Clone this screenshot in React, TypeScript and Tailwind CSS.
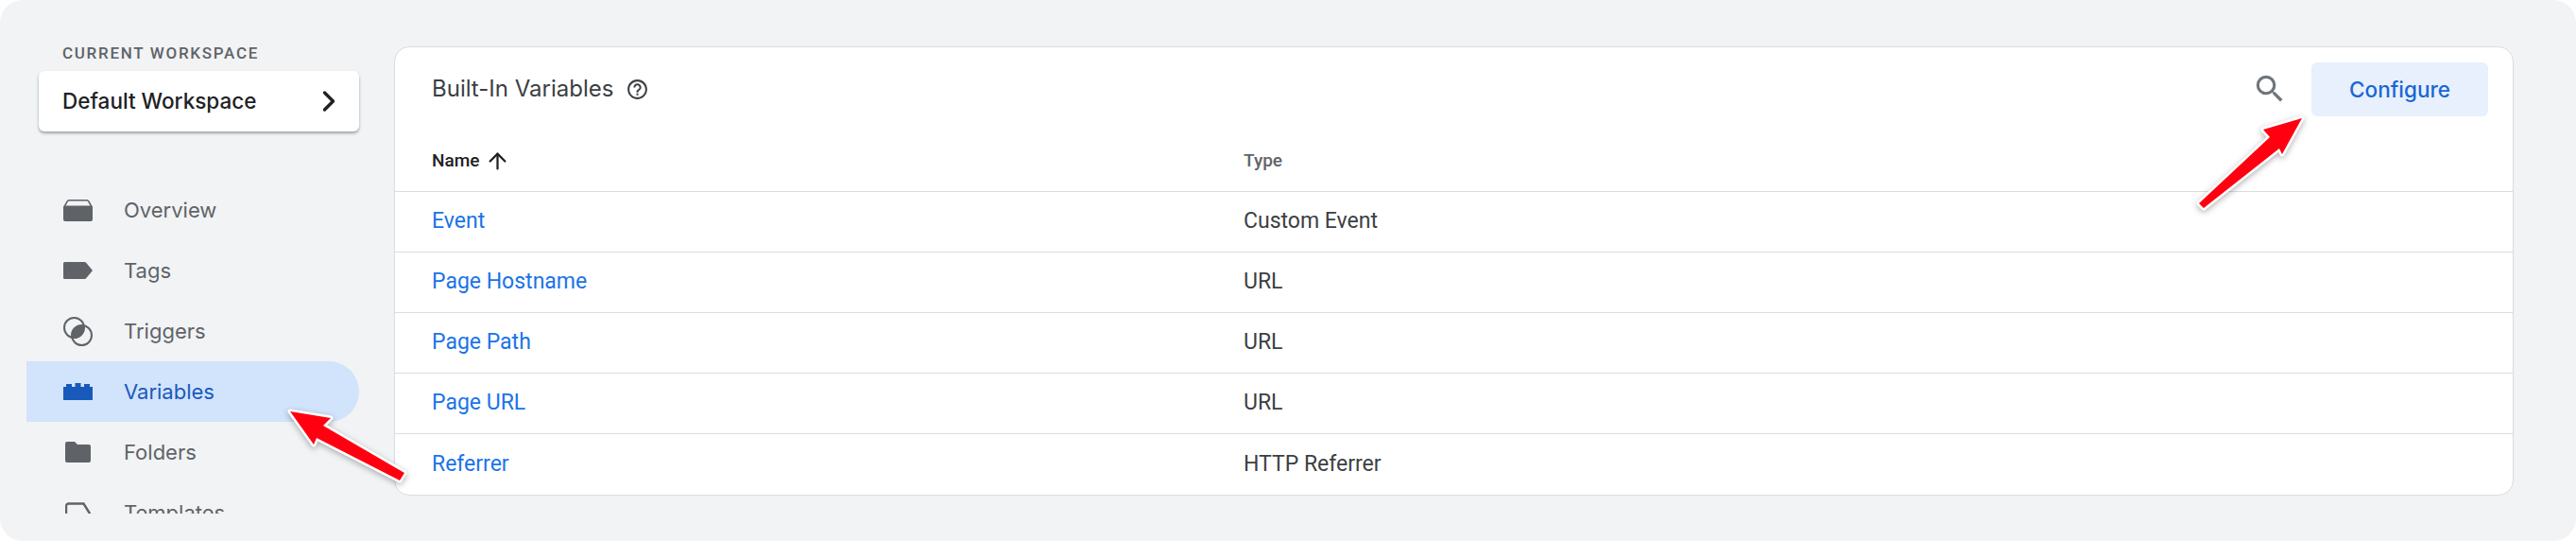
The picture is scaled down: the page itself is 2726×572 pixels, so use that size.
import { ChevronRight, ArrowUp } from "lucide-react";

const rows = [
  { name: "Event", type: "Custom Event" },
  { name: "Page Hostname", type: "URL" },
  { name: "Page Path", type: "URL" },
  { name: "Page URL", type: "URL" },
  { name: "Referrer", type: "HTTP Referrer" },
];

function OverviewIcon() {
  return (
    <svg width="31" height="23" viewBox="0 0 31 23">
      <path d="M6 .8h19a2 2 0 0 1 1.800 1.100L30.200 8H.8L4.200 1.900A2 2 0 0 1 6 .8z" fill="none" stroke="#5f6368" strokeWidth="1.600" />
      <path d="M0 8.500a2 2 0 0 1 2-2h27a2 2 0 0 1 2 2V21a2 2 0 0 1-2 2H2a2 2 0 0 1-2-2z" fill="#5f6368" />
    </svg>
  );
}

function TagIcon() {
  return (
    <svg width="31" height="18" viewBox="0 0 31 18">
      <path d="M1.500 0h21a2 2 0 0 1 1.600.8L31 9l-6.900 8.200a2 2 0 0 1-1.600.8h-21A1.500 1.500 0 0 1 0 16.500v-15A1.500 1.500 0 0 1 1.500 0z" fill="#5f6368" />
    </svg>
  );
}

function TriggerIcon() {
  return (
    <svg width="31" height="31" viewBox="0 0 31 31">
      <defs>
        <clipPath id="trigger-lens">
          <circle cx="11.500" cy="11.500" r="10.500" />
        </clipPath>
      </defs>
      <circle cx="19.500" cy="19.500" r="10.500" fill="#5f6368" clipPath="url(#trigger-lens)" />
      <circle cx="11.500" cy="11.500" r="10.500" fill="none" stroke="#5f6368" strokeWidth="2" />
      <circle cx="19.500" cy="19.500" r="10.500" fill="none" stroke="#5f6368" strokeWidth="2" />
    </svg>
  );
}

function BrickIcon() {
  return (
    <svg width="31" height="18" viewBox="0 0 31 18">
      <path d="M0 4h3V1h6v3h3.500V0h6v4H22V1h6v3h3v14H0z" fill="#185abc" />
    </svg>
  );
}

function FolderIcon() {
  return (
    <svg width="27" height="22" viewBox="0 0 27 22" className="ml-[2px]">
      <path d="M2 0h8l3 3h12a2 2 0 0 1 2 2v15a2 2 0 0 1-2 2H2a2 2 0 0 1-2-2V2a2 2 0 0 1 2-2z" fill="#5f6368" />
    </svg>
  );
}

function TemplateIcon() {
  return (
    <svg width="27" height="22" viewBox="0 0 27 22" className="ml-[2px]">
      <path d="M1 22V4a2.500 2.500 0 0 1 2.500-2.500h16L26 12v10" fill="none" stroke="#5f6368" strokeWidth="2.400" />
    </svg>
  );
}

function SearchIcon() {
  return (
    <svg width="38" height="38" viewBox="0 0 24 24" fill="#70757a">
      <path d="M15.500 14h-.79l-.28-.27A6.471 6.471 0 0 0 16 9.500 6.500 6.500 0 1 0 9.500 16c1.610 0 3.090-.59 4.230-1.570l.27.28v.79l5 4.990L20.490 19l-4.990-5zm-6 0C7.010 14 5 11.990 5 9.500S7.010 5 9.500 5 14 7.010 14 9.500 11.990 14 9.500 14z" />
    </svg>
  );
}

function HelpIcon() {
  return (
    <svg width="25" height="25" viewBox="0 0 24 24" fill="#3c4043">
      <path d="M11 18h2v-2h-2v2zm1-16C6.480 2 2 6.480 2 12s4.480 10 10 10 10-4.480 10-10S17.520 2 12 2zm0 18c-4.410 0-8-3.590-8-8s3.590-8 8-8 8 3.590 8 8-3.590 8-8 8zm0-14c-2.210 0-4 1.790-4 4h2c0-1.100.9-2 2-2s2 .9 2 2c0 2-3 1.750-3 5h2c0-2.250 3-2.500 3-5 0-2.210-1.790-4-4-4z" />
    </svg>
  );
}

const nav = [
  { label: "Overview", icon: <OverviewIcon /> },
  { label: "Tags", icon: <TagIcon /> },
  { label: "Triggers", icon: <TriggerIcon /> },
  { label: "Variables", icon: <BrickIcon />, active: true },
  { label: "Folders", icon: <FolderIcon /> },
  { label: "Templates", icon: <TemplateIcon /> },
];

function RedArrow({ className, width, height, points }: { className: string; width: number; height: number; points: string }) {
  return (
    <svg
      className={`absolute drop-shadow-[0_2px_3px_rgba(0,0,0,0.3)] ${className}`}
      width={width}
      height={height}
      viewBox={`0 0 ${width} ${height}`}
    >
      <polygon points={points} fill="#ff0010" stroke="#fff" strokeWidth="5" strokeLinejoin="round" paintOrder="stroke" />
    </svg>
  );
}

export default function App() {
  return (
    <div className="relative h-[572px] w-[2726px] overflow-hidden bg-white font-['Roboto',sans-serif]">
      <div className="flex h-full rounded-[24px] bg-[#f1f3f4]">
        {/* sidebar */}
        <div className="flex h-[543px] w-[417px] shrink-0 flex-col overflow-hidden pt-[46px] pr-[37px] pl-[28px]">
          <div className="shrink-0 pl-[38px] text-[17px] leading-[21px] font-medium tracking-[1.7px] text-[#5f6368] uppercase">
            Current Workspace
          </div>
          <div className="mt-[8px] ml-[13px] flex h-[64px] shrink-0 items-center justify-between rounded-[6px] bg-white pr-[14px] pl-[25px] shadow-[0_2px_3px_rgba(60,64,67,0.45)]">
            <span className="font-['Inter',sans-serif] text-[22.5px] font-medium text-[#202124]">Default Workspace</span>
            <ChevronRight size={36} strokeWidth={2.3} className="text-[#202124]" />
          </div>
          <div className="mt-[51px] flex flex-col">
            {nav.map((item) => (
              <div
                key={item.label}
                className={`flex h-[64px] shrink-0 items-center rounded-r-[32px] pl-[39px] ${item.active ? "bg-[#d2e3fc] text-[#185abc]" : "text-[#5f6368]"}`}
              >
                <span className="flex w-[64px] shrink-0 items-center justify-start">{item.icon}</span>
                <span className="font-['Inter',sans-serif] text-[22px] font-normal">{item.label}</span>
              </div>
            ))}
          </div>
        </div>

        {/* card */}
        <div className="mt-[49px] flex h-[475px] w-[2243px] flex-col rounded-[16px] border border-[#dadce0] bg-white">
          <div className="flex h-[88px] shrink-0 items-center justify-between pr-[26px] pl-[39px]">
            <div className="flex items-center gap-[13px]">
              <span className="font-['Inter',sans-serif] text-[24px] text-[#3c4043]">Built-In Variables</span>
              <HelpIcon />
            </div>
            <div className="flex items-center gap-[25px]">
              <SearchIcon />
              <button className="h-[57px] w-[187px] rounded-[6px] bg-[#e8f0fe] pt-[2px] font-['Inter',sans-serif] text-[22.5px] font-medium text-[#1967d2]">
                Configure
              </button>
            </div>
          </div>
          <div className="flex h-[65px] shrink-0 items-center border-b border-[#dadce0] pl-[39px] text-[19px]">
            <div className="flex w-[859px] items-center gap-[6px] font-medium text-[#202124]">
              Name <ArrowUp size={27} strokeWidth={2} />
            </div>
            <div className="font-medium text-[#5f6368]">Type</div>
          </div>
          {rows.map((row, i) => (
            <div
              key={row.name}
              className={`flex h-[64px] shrink-0 items-center pl-[39px] text-[23px] ${i < rows.length - 1 ? "border-b border-[#dadce0]" : ""}`}
            >
              <div className="w-[859px] text-[#1a73e8]">{row.name}</div>
              <div className="text-[#3c4043]">{row.type}</div>
            </div>
          ))}
        </div>
      </div>

      <RedArrow
        className="top-[425px] left-[297px]"
        width={145}
        height={95}
        points="10,10 53,17 45,25 131,75 126,83 38,38 35,45"
      />
      <RedArrow
        className="top-[115px] left-[2317px]"
        width={130}
        height={115}
        points="119,10 98,48 95,42 15,105 10,100 85,30 78,22"
      />
    </div>
  );
}
